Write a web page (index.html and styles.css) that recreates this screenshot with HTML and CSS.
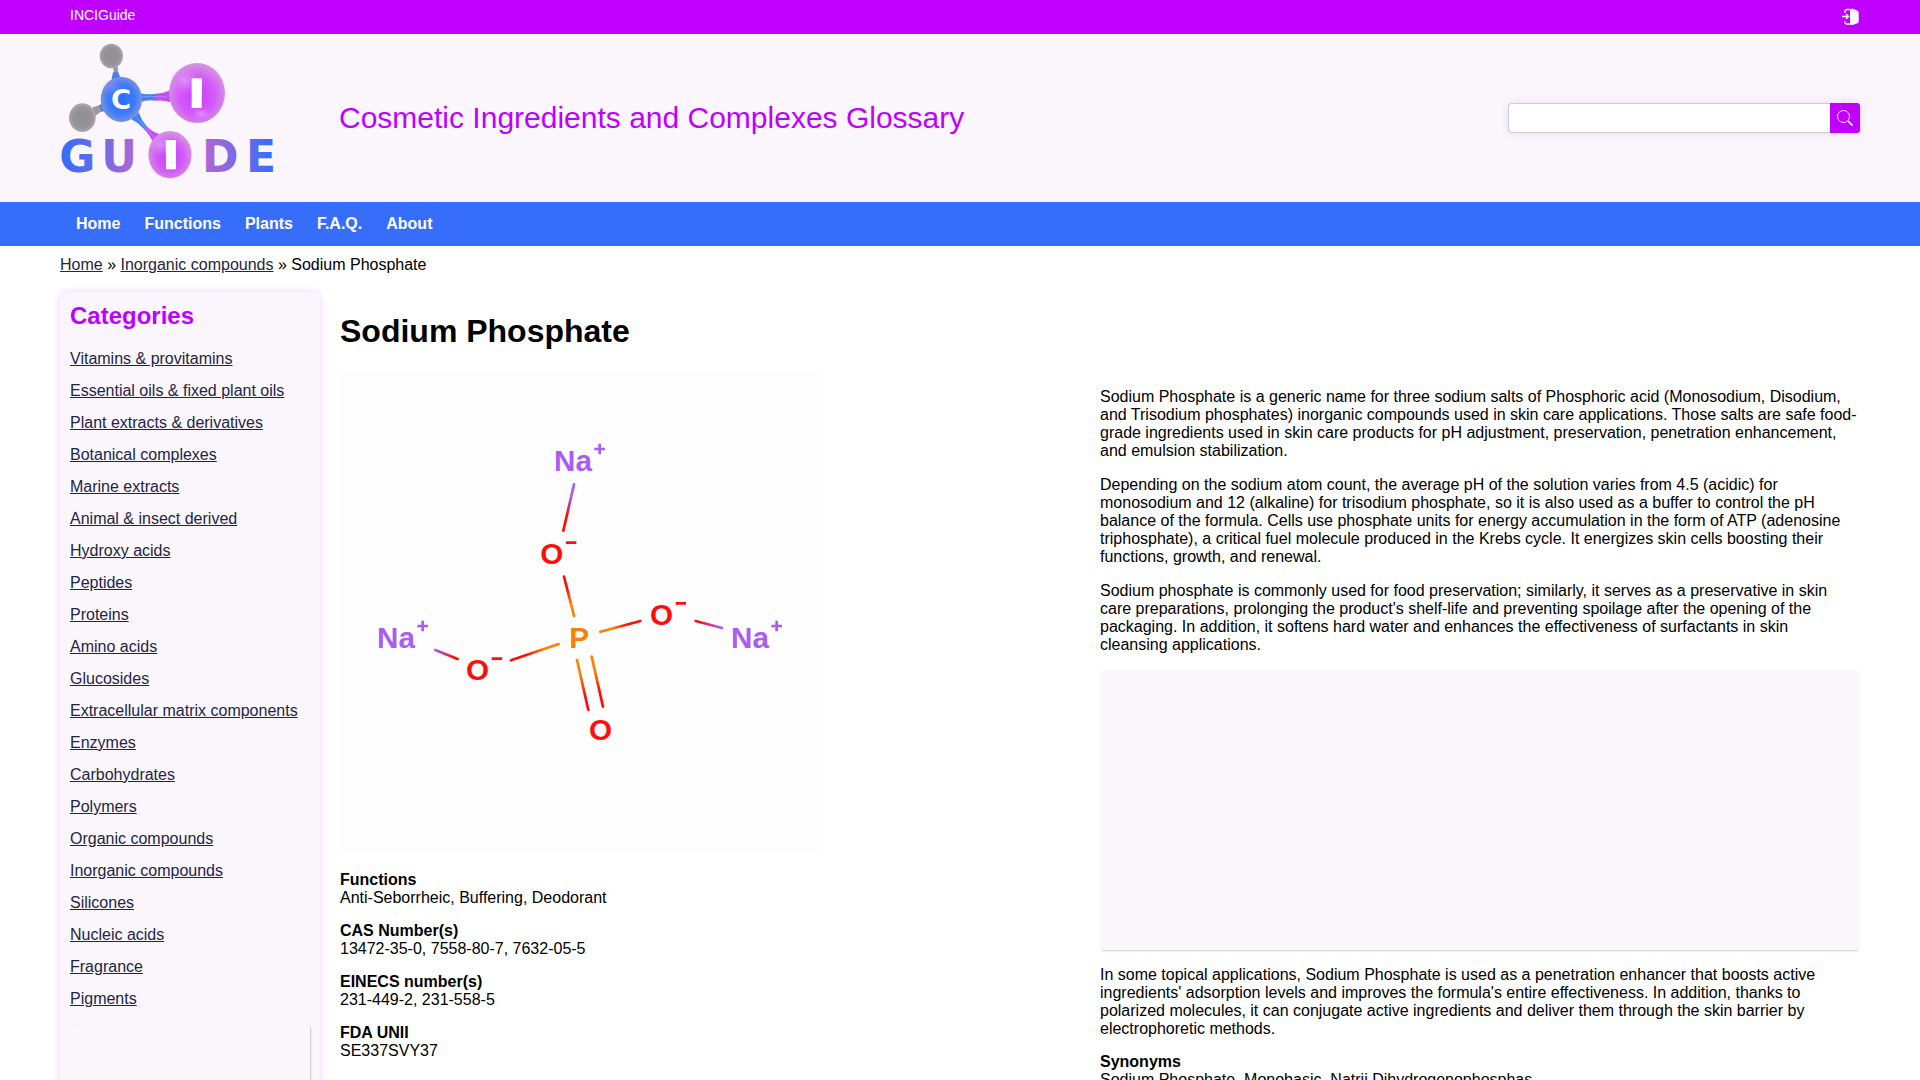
FILE: index.html
```html
<!DOCTYPE html>
<html lang="en">
<head>
<meta charset="utf-8">
<meta name="viewport" content="width=device-width, initial-scale=1">
<title>Sodium Phosphate - INCIGuide</title>
<link rel="stylesheet" href="styles.css">
</head>
<body>
<div class="topbar">
  <span>INCIGuide</span>
  <a class="login" href="#login" aria-label="Log in">
    <svg viewBox="0 0 18 18" width="18" height="18" aria-hidden="true">
      <path d="M8 1.500 10 .5Q13 1 16 3q.7.500.7 1.500v9q0 1-.7 1.500-3 1.500-6 2L8 16.500Z" fill="#fff"/>
      <path d="M8 1.500H5Q3 1.500 3 4v1M8 16H5Q3 16 3 14v-1M0 8.500h6M4 6l2.500 2.500L4 11" fill="none" stroke="#fff" stroke-width="1.300"/>
    </svg>
  </a>
</div>
<header class="header">
  <a class="logo" href="#home" aria-label="INCI Guide">
    <svg viewBox="30 24 645 450" width="215" height="150" aria-hidden="true">
      <defs>
        <radialGradient id="pink" cx=".5" cy=".55" r=".53"><stop offset="0" stop-color="#c93dff"/><stop offset=".6" stop-color="#d45af9"/><stop offset="1" stop-color="#d394df"/></radialGradient>
        <radialGradient id="shine"><stop offset="0" stop-color="#e0a0ff" stop-opacity=".8"/><stop offset="1" stop-color="#d870ff" stop-opacity="0"/></radialGradient>
        <radialGradient id="blue" cx=".5" cy=".5" r=".52"><stop offset="0" stop-color="#2b6cff"/><stop offset=".65" stop-color="#3e7cfa"/><stop offset="1" stop-color="#8495d8"/></radialGradient>
        <radialGradient id="grey"><stop offset="0" stop-color="#909090"/><stop offset=".7" stop-color="#969396"/><stop offset="1" stop-color="#b0a5b2"/></radialGradient>
        <linearGradient id="word" gradientUnits="userSpaceOnUse" x1="35" y1="0" x2="670" y2="0"><stop offset="0" stop-color="#366dfb"/><stop offset=".05" stop-color="#3f6df8"/><stop offset=".34" stop-color="#a968d6"/><stop offset=".68" stop-color="#b067d4"/><stop offset=".97" stop-color="#3f6df8"/></linearGradient>
        <linearGradient id="bondR"><stop offset=".5" stop-color="#4382f4"/><stop offset=".5" stop-color="#c44df8"/></linearGradient>
        <linearGradient id="bondD" gradientUnits="userSpaceOnUse" x1="250" y1="240" x2="318" y2="320"><stop offset=".52" stop-color="#4382f4"/><stop offset=".52" stop-color="#c44df8"/></linearGradient>
      </defs>
      <path d="M180 90 190 97 191 113 185 132 212 132 205 112 202 94 210 88Z" fill="#9b9a9b"/>
      <path d="M189 112h15l8 20h-27Z" fill="#4780f3"/>
      <path d="M128 217 148 211 165 200 174 225 153 230 132 245Z" fill="#9b9a9b"/>
      <path d="M147 211 170 200 178 225 154 230Z" fill="#4780f3"/>
      <path d="M268 174Q290 180 317 176 345 174 362 164V202Q340 194 317 197 290 193 268 203Z" fill="url(#bondR)"/>
      <path d="M275 185H350" stroke="#b5b1ff" stroke-width="3" opacity=".5"/>
      <path d="M266 232Q274 256 290 274 309 294 335 299L311 326Q301 301 281 281 264 262 243 252Z" fill="url(#bondD)"/>
      <path d="M260 248 315 310" stroke="#b5b1ff" stroke-width="3" opacity=".5"/>
      <ellipse cx="184" cy="63" rx="35" ry="37" fill="url(#grey)"/>
      <ellipse cx="97" cy="248" rx="40" ry="43" fill="url(#grey)"/>
      <ellipse cx="214" cy="193" rx="62" ry="68" fill="url(#blue)"/>
      <ellipse cx="190" cy="157" rx="33" ry="30" fill="url(#shine)" opacity=".35"/>
      <ellipse cx="441" cy="174" rx="84" ry="90" fill="url(#pink)"/>
      <ellipse cx="405" cy="137" rx="48" ry="43" fill="url(#shine)"/>
      <ellipse cx="455" cy="237" rx="36" ry="22" fill="url(#shine)"/>
      <ellipse cx="360" cy="359" rx="65" ry="71" fill="url(#pink)"/>
      <ellipse cx="332" cy="330" rx="36" ry="34" fill="url(#shine)"/>
      <path d="M425 130h31l-1 89h-30ZM347 315h31v88h-30Z" fill="#fff"/>
      <g class="logo-word" font-size="132">
        <text x="28" y="411">G</text><text x="154" y="411">U</text><text x="456" y="411">D</text><text x="588" y="411">E</text>
      </g>
      <text class="logo-c" x="183" y="221" font-size="82">C</text>
    </svg>
  </a>
  <div class="tagline">Cosmetic Ingredients and Complexes Glossary</div>
  <form class="search" role="search">
    <input type="search" aria-label="Search ingredients">
    <button type="submit" aria-label="Search">
      <svg viewBox="0 0 16 16" width="16" height="16" aria-hidden="true"><circle cx="6.500" cy="6.500" r="6" fill="none" stroke="#fff"/><path d="m11 11 4.500 4.500" stroke="#fff" stroke-width="1.700"/></svg>
    </button>
  </form>
</header>
<nav class="nav" aria-label="Main">
  <a href="#home">Home</a><a href="#functions">Functions</a><a href="#plants">Plants</a><a href="#faq">F.A.Q.</a><a href="#about">About</a>
</nav>
<div class="breadcrumbs"><a href="#home">Home</a> » <a href="#inorganic">Inorganic compounds</a> » Sodium Phosphate</div>
<div class="layout">
  <aside class="sidebar">
    <h2>Categories</h2>
    <ul>
      <li><a href="#c1">Vitamins &amp; provitamins</a></li>
      <li><a href="#c2">Essential oils &amp; fixed plant oils</a></li>
      <li><a href="#c3">Plant extracts &amp; derivatives</a></li>
      <li><a href="#c4">Botanical complexes</a></li>
      <li><a href="#c5">Marine extracts</a></li>
      <li><a href="#c6">Animal &amp; insect derived</a></li>
      <li><a href="#c7">Hydroxy acids</a></li>
      <li><a href="#c8">Peptides</a></li>
      <li><a href="#c9">Proteins</a></li>
      <li><a href="#c10">Amino acids</a></li>
      <li><a href="#c11">Glucosides</a></li>
      <li><a href="#c12">Extracellular matrix components</a></li>
      <li><a href="#c13">Enzymes</a></li>
      <li><a href="#c14">Carbohydrates</a></li>
      <li><a href="#c15">Polymers</a></li>
      <li><a href="#c16">Organic compounds</a></li>
      <li><a href="#c17">Inorganic compounds</a></li>
      <li><a href="#c18">Silicones</a></li>
      <li><a href="#c19">Nucleic acids</a></li>
      <li><a href="#c20">Fragrance</a></li>
      <li><a href="#c21">Pigments</a></li>
    </ul>
    <div class="panel panel-side"></div>
  </aside>
  <main class="main">
    <h1>Sodium Phosphate</h1>
    <div class="columns">
      <section class="facts">
        <svg class="molecule" viewBox="0 6 1434 1440" width="478" height="480" role="img" aria-label="Structure of sodium phosphate">
          <defs>
            <linearGradient id="b1" gradientUnits="userSpaceOnUse" x1="702" y1="343" x2="670" y2="482"><stop offset=".25" stop-color="#ab5cf2"/><stop offset=".65" stop-color="#ff0d0d"/></linearGradient>
            <linearGradient id="b2" gradientUnits="userSpaceOnUse" x1="672" y1="620" x2="702" y2="738"><stop offset=".3" stop-color="#ff0d0d"/><stop offset=".7" stop-color="#ff8000"/></linearGradient>
            <linearGradient id="b3" gradientUnits="userSpaceOnUse" x1="781" y1="785" x2="901" y2="753"><stop offset=".3" stop-color="#ff8000"/><stop offset=".7" stop-color="#ff0d0d"/></linearGradient>
            <linearGradient id="b4" gradientUnits="userSpaceOnUse" x1="1067" y1="753" x2="1146" y2="774"><stop offset=".1" stop-color="#ff0d0d"/><stop offset=".9" stop-color="#ab5cf2"/></linearGradient>
            <linearGradient id="b5" gradientUnits="userSpaceOnUse" x1="656" y1="822" x2="513" y2="871"><stop offset=".3" stop-color="#ff8000"/><stop offset=".7" stop-color="#ff0d0d"/></linearGradient>
            <linearGradient id="b6" gradientUnits="userSpaceOnUse" x1="286" y1="840" x2="353" y2="867"><stop offset="0" stop-color="#ab5cf2"/><stop offset=".8" stop-color="#ff0d0d"/></linearGradient>
            <linearGradient id="b7" gradientUnits="userSpaceOnUse" x1="733" y1="865" x2="767" y2="1015"><stop offset=".3" stop-color="#ff8000"/><stop offset=".7" stop-color="#ff0d0d"/></linearGradient>
          </defs>
          <g fill="none" stroke-width="8" stroke-linecap="round">
            <path stroke="url(#b1)" d="M702 343 670 482"/><path stroke="url(#b2)" d="M672 620 702 738"/>
            <path stroke="url(#b3)" d="M781 785 901 753"/><path stroke="url(#b4)" d="M1067 753 1146 774"/>
            <path stroke="url(#b5)" d="M656 822 513 871"/><path stroke="url(#b6)" d="M286 840 353 867"/>
            <path stroke="url(#b7)" d="M711 870 745 1020M755 860 789 1010"/>
          </g>
          <path d="M678 518h31M1007 700h31M455 866h31" stroke="#ff0d0d" stroke-width="8"/>
          <path d="M763 237h32M779 221v32M232 768h32M248 752v32M1294 768h32M1310 752v32" stroke="#ab5cf2" stroke-width="8"/>
          <g class="atom sodium"><text x="642" y="303">Na</text><text x="111" y="834">Na</text><text x="1173" y="834">Na</text></g>
          <g class="atom oxygen"><text x="601" y="583">O</text><text x="930" y="766">O</text><text x="378" y="931">O</text><text x="747" y="1111">O</text></g>
          <text class="atom phosphorus" x="688" y="834">P</text>
        </svg>
        <dl>
          <div><dt>Functions</dt><dd>Anti-Seborrheic, Buffering, Deodorant</dd></div>
          <div><dt>CAS Number(s)</dt><dd>13472-35-0, 7558-80-7, 7632-05-5</dd></div>
          <div><dt>EINECS number(s)</dt><dd>231-449-2, 231-558-5</dd></div>
          <div><dt>FDA UNII</dt><dd>SE337SVY37</dd></div>
        </dl>
      </section>
      <section class="description">
        <p>Sodium Phosphate is a generic name for three sodium salts of Phosphoric acid (Monosodium, Disodium, and Trisodium phosphates) inorganic compounds used in skin care applications. Those salts are safe food-grade ingredients used in skin care products for pH adjustment, preservation, penetration enhancement, and emulsion stabilization.</p>
        <p>Depending on the sodium atom count, the average pH of the solution varies from 4.5 (acidic) for monosodium and 12 (alkaline) for trisodium phosphate, so it is also used as a buffer to control the pH balance of the formula. Cells use phosphate units for energy accumulation in the form of ATP (adenosine triphosphate), a critical fuel molecule produced in the Krebs cycle. It energizes skin cells boosting their functions, growth, and renewal.</p>
        <p>Sodium phosphate is commonly used for food preservation; similarly, it serves as a preservative in skin care preparations, prolonging the product's shelf-life and preventing spoilage after the opening of the packaging. In addition, it softens hard water and enhances the effectiveness of surfactants in skin cleansing applications.</p>
        <div class="panel panel-wide"></div>
        <p>In some topical applications, Sodium Phosphate is used as a penetration enhancer that boosts active ingredients' adsorption levels and improves the formula's entire effectiveness. In addition, thanks to polarized molecules, it can conjugate active ingredients and deliver them through the skin barrier by electrophoretic methods.</p>
        <dl>
          <div><dt>Synonyms</dt><dd>Sodium Phosphate, Monobasic, Natrii Dihydrogenophosphas</dd></div>
        </dl>
      </section>
    </div>
  </main>
</div>
</body>
</html>
```
FILE: styles.css
```css
* { box-sizing: border-box; }
body {
  margin: 0;
  font: 16px/18px "Liberation Sans", Arial, sans-serif;
  color: #000;
  background: #fff;
}
h1, h2, p, ul, dl, dd { margin: 0; padding: 0; }
a { color: #1e2545; }
svg { display: block; }

.topbar {
  display: flex;
  justify-content: space-between;
  padding: 6px 60px 10px 70px;
  background: #bf00ff;
  color: #fff;
  font-size: 14px;
}
.login { padding-top: 2px; height: 18px; }

.header {
  display: grid;
  grid-template-columns: 260px 1fr 352px;
  column-gap: 19px;
  align-items: center;
  padding: 9px 60px;
  background: #faf6fc;
}
.logo { justify-self: start; }
.logo-word, .logo-c { font-family: "DejaVu Sans", sans-serif; font-weight: 700; }
.logo-word { fill: url(#word); }
.logo-c { fill: #fff; }
.tagline { font-size: 30px; line-height: 34px; color: #bf00ff; }
.search {
  display: flex;
  height: 30px;
  border-radius: 4px;
  box-shadow: 0 0 8px #bf00ff22;
}
.search input {
  flex: 1;
  min-width: 0;
  margin: 0;
  padding: 0 8px;
  border: 1px solid #ccc;
  border-right: 0;
  border-radius: 4px 0 0 4px;
  background: #fff;
  font: inherit;
}
.search button {
  display: grid;
  place-items: center;
  width: 30px;
  padding: 0;
  border: 0;
  border-radius: 0 3px 3px 0;
  background: #bf00ff;
}

.nav {
  display: flex;
  gap: 24px;
  padding: 13px 76px;
  background: #366dfb;
}
.nav a { color: #fff; font-weight: 700; text-decoration: none; }

.breadcrumbs { padding: 10px 60px 18px; }

.layout {
  display: grid;
  grid-template-columns: 260px minmax(0, 1fr);
  gap: 20px;
  padding: 0 60px;
}
.sidebar {
  padding: 10px;
  border-radius: 8px;
  background: #faf6fc;
  box-shadow: 0 0 8px #bf00ff33;
}
.sidebar h2 { font-size: 24px; line-height: 28px; color: #bf00ff; }
.sidebar ul { padding: 13px 0 10px; list-style: none; }
.sidebar li { padding: 7px 0; }
.panel { border-radius: 4px; background: #faf6fc; box-shadow: 1px 1px 2px #0003; }
.panel-side { height: 600px; }
.panel-wide { height: 280px; box-shadow: 0 2px 2px -1px #0003; }

.main h1 { padding: 21px 0 22px; font-size: 32px; line-height: 37px; }
.columns { display: grid; grid-template-columns: 1fr 1fr; }
.molecule { max-width: 100%; background: #fdfdfd; }
.atom { font-size: 89px; font-weight: 700; }
.sodium { fill: #ab5cf2; }
.oxygen { fill: #ff0d0d; }
.phosphorus { fill: #ff8000; }
.facts dl { padding-top: 19px; }
dl { display: grid; gap: 15px; }
dt { font-weight: 700; }
.description { padding-top: 16px; }
.description p, .panel-wide { margin-bottom: 16px; }
.description p:last-of-type { margin-bottom: 15px; }
```
